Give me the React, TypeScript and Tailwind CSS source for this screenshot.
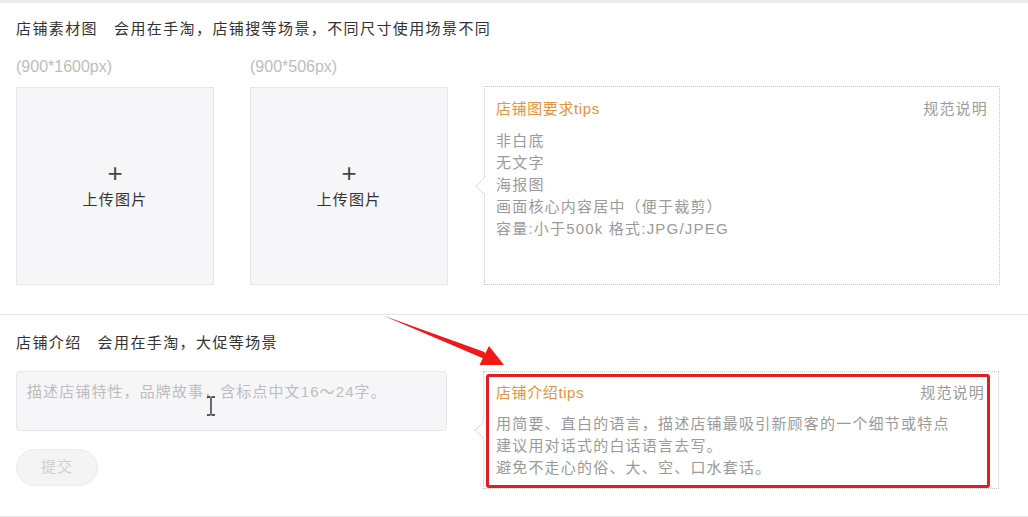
import React from 'react';

const font = { fontFamily: '"Liberation Sans", "Noto Sans CJK SC", sans-serif' };

function UploadBox() {
  return (
    <div className="w-[198px] h-[198px] bg-[#f6f6f8] border border-[#e6e6ea] flex flex-col items-center justify-center">
      <span className="text-[26px] leading-[26px] text-[#444] font-light">+</span>
      <span className="text-[15px] text-[#333] mt-[3px] tracking-[1.2px]">上传图片</span>
    </div>
  );
}

function TipsBox({ title, lines, height, highlight }: { title: string; lines: string[]; height: string; highlight?: boolean }) {
  return (
    <div className={`relative w-[516px] ${height} border border-dotted border-[#c8c8c8] bg-white`}>
      <span className="absolute left-[-7px] top-1/2 -mt-[6px] w-[12px] h-[12px] rotate-45 bg-white border-l border-b border-dotted border-[#c8c8c8]" />
      <div
        className={`relative ${
          highlight
            ? 'h-[114px] ml-[2px] mr-[8px] mt-[2px] border-[3px] border-[#e0201c] rounded-[3px] pl-[7px] pr-[2px] pt-[5px]'
            : 'h-full px-[11px] pt-[11px]'
        }`}
      >
        <div className="flex justify-between items-center h-[22px]">
          <span className="text-[15px] text-[#e5943a] tracking-[0.6px]">{title}</span>
          <span className="text-[15px] text-[#9a9a9a] tracking-[1.2px]">规范说明</span>
        </div>
        <div className={`${highlight ? 'mt-[9px]' : 'mt-[10px]'} text-[15px] leading-[22px] text-[#9a9a9a] tracking-[1.2px]`}>
          {lines.map((l) => (
            <div key={l}>{l}</div>
          ))}
        </div>
      </div>
    </div>
  );
}

export default function App() {
  return (
    <div className="relative w-[1028px] h-[517px] bg-white overflow-hidden" style={font}>
      <div className="h-[3px] bg-[#ececec]" />

      <section className="pl-[16px] pt-[16px] pb-[29px] border-b border-[#e6e6e6]">
        <h2 className="text-[15px] text-[#333] h-[20px] leading-[20px] tracking-[1.4px]">
          店铺素材图<span className="ml-[16px]">会用在手淘，店铺搜等场景，不同尺寸使用场景不同</span>
        </h2>
        <div className="flex mt-[18px] gap-[36px] items-end">
          <div className="flex flex-col">
            <span className="text-[16px] leading-[20px] text-[#bdbdbd]">(900*1600px)</span>
            <div className="mt-[10px]">
              <UploadBox />
            </div>
          </div>
          <div className="flex flex-col">
            <span className="text-[16px] leading-[20px] text-[#bdbdbd]">(900*506px)</span>
            <div className="mt-[10px]">
              <UploadBox />
            </div>
          </div>
          <TipsBox
            title="店铺图要求tips"
            height="h-[199px]"
            lines={['非白底', '无文字', '海报图', '画面核心内容居中（便于裁剪）', '容量:小于500k 格式:JPG/JPEG']}
          />
        </div>
      </section>

      <section className="pl-[16px] pt-[18px] h-[202px] border-b border-[#e6e6e6]">
        <h2 className="text-[15px] text-[#333] h-[20px] leading-[20px] tracking-[1.4px]">
          店铺介绍<span className="ml-[16px]">会用在手淘，大促等场景</span>
        </h2>
        <div className="flex mt-[18px] gap-[36px]">
          <div className="flex flex-col">
            <div className="relative w-[431px] h-[60px] bg-[#f6f6f8] border border-[#e6e6ea] rounded-[4px] px-[10px] pt-[8px]">
              <span className="text-[15px] text-[#bdbdbd] tracking-[1.1px]">描述店铺特性，品牌故事，含标点中文16～24字。</span>
              <svg className="absolute left-[188px] top-[24px]" width="12" height="20" viewBox="0 0 12 20">
                <path d="M2 1h3.5M6.5 1H10M6 1.5v17M2 19h3.5M6.5 19H10" stroke="#222" strokeWidth="1.3" fill="none" />
              </svg>
            </div>
            <button className="mt-[18px] w-[82px] h-[37px] rounded-full bg-[#f4f4f4] border border-[#ececec] text-[15px] text-[#cfcfcf] tracking-[1px]">
              提交
            </button>
          </div>
          <TipsBox
            title="店铺介绍tips"
            height="h-[118px]"
            highlight
            lines={['用简要、直白的语言，描述店铺最吸引新顾客的一个细节或特点', '建议用对话式的白话语言去写。', '避免不走心的俗、大、空、口水套话。']}
          />
        </div>
      </section>

      <svg className="absolute left-0 top-0 pointer-events-none" width="1028" height="517">
        <polygon points="383,315.5 487,360 484.5,352" fill="#f01818" />
        <polygon points="504,365 479.5,365 489,346" fill="#f01818" />
      </svg>
    </div>
  );
}
